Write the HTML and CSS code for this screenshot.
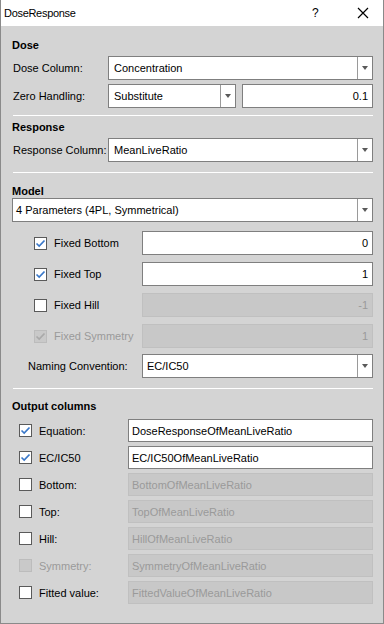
FILE: index.html
```html
<!DOCTYPE html>
<html>
<head>
<meta charset="utf-8">
<link rel="stylesheet" href="styles.css">
</head>
<body>
<div class="win">
  <div class="titlebar">
    <span class="title">DoseResponse</span>
    <span class="help">?</span>
    <svg class="close" width="12" height="12" viewBox="0 0 12 12"><path d="M1 1 L11 11 M11 1 L1 11" stroke="#000" stroke-width="1.2" fill="none"/></svg>
  </div>
  <div class="content">
    <div class="hdr h-dose">Dose</div>
    <div class="lrow m4">
      <span class="lbl w96">Dose Column:</span>
      <div class="combo pad5"><span class="val">Concentration</span><span class="btn"><i class="arrow"></i></span></div>
    </div>
    <div class="lrow m4">
      <span class="lbl w96">Zero Handling:</span>
      <div class="pair">
        <div class="combo pad5"><span class="val">Substitute</span><span class="btn"><i class="arrow"></i></span></div>
        <div class="field num">0.1</div>
      </div>
    </div>
    <div class="sep s1"></div>
    <div class="hdr h-resp">Response</div>
    <div class="lrow m4">
      <span class="lbl w96">Response Column:</span>
      <div class="combo pad5"><span class="val">MeanLiveRatio</span><span class="btn"><i class="arrow"></i></span></div>
    </div>
    <div class="sep s2"></div>
    <div class="hdr h-model">Model</div>
    <div class="combo pad3 model-combo"><span class="val">4 Parameters (4PL, Symmetrical)</span><span class="btn"><i class="arrow"></i></span></div>

    <div class="prow first">
      <span class="cb checked"><svg viewBox="0 0 13 13" width="13" height="13"><path d="M2.5 6.5 L5.2 9 L10.5 3.5" stroke="#3a78c9" stroke-width="1.7" fill="none"/></svg></span>
      <span class="plbl">Fixed Bottom</span>
      <div class="field num">0</div>
    </div>
    <div class="prow">
      <span class="cb checked"><svg viewBox="0 0 13 13" width="13" height="13"><path d="M2.5 6.5 L5.2 9 L10.5 3.5" stroke="#3a78c9" stroke-width="1.7" fill="none"/></svg></span>
      <span class="plbl">Fixed Top</span>
      <div class="field num">1</div>
    </div>
    <div class="prow">
      <span class="cb"></span>
      <span class="plbl">Fixed Hill</span>
      <div class="field num disabled">-1</div>
    </div>
    <div class="prow">
      <span class="cb dis"><svg viewBox="0 0 13 13" width="13" height="13"><path d="M2.5 6.5 L5.2 9 L10.5 3.5" stroke="#a9a9a9" stroke-width="1.7" fill="none"/></svg></span>
      <span class="plbl dtext">Fixed Symmetry</span>
      <div class="field num disabled">1</div>
    </div>
    <div class="nrow">
      <span class="nlbl">Naming Convention:</span>
      <div class="combo pad4"><span class="val">EC/IC50</span><span class="btn"><i class="arrow"></i></span></div>
    </div>
    <div class="sep s3"></div>
    <div class="hdr h-out">Output columns</div>

    <div class="orow first">
      <span class="cb checked"><svg viewBox="0 0 13 13" width="13" height="13"><path d="M2.5 6.5 L5.2 9 L10.5 3.5" stroke="#3a78c9" stroke-width="1.7" fill="none"/></svg></span>
      <span class="olbl">Equation:</span>
      <div class="field txt">DoseResponseOfMeanLiveRatio</div>
    </div>
    <div class="orow">
      <span class="cb checked"><svg viewBox="0 0 13 13" width="13" height="13"><path d="M2.5 6.5 L5.2 9 L10.5 3.5" stroke="#3a78c9" stroke-width="1.7" fill="none"/></svg></span>
      <span class="olbl">EC/IC50</span>
      <div class="field txt">EC/IC50OfMeanLiveRatio</div>
    </div>
    <div class="orow">
      <span class="cb"></span>
      <span class="olbl">Bottom:</span>
      <div class="field txt disabled">BottomOfMeanLiveRatio</div>
    </div>
    <div class="orow">
      <span class="cb"></span>
      <span class="olbl">Top:</span>
      <div class="field txt disabled">TopOfMeanLiveRatio</div>
    </div>
    <div class="orow">
      <span class="cb"></span>
      <span class="olbl">Hill:</span>
      <div class="field txt disabled">HillOfMeanLiveRatio</div>
    </div>
    <div class="orow">
      <span class="cb dis"></span>
      <span class="olbl dtext">Symmetry:</span>
      <div class="field txt disabled">SymmetryOfMeanLiveRatio</div>
    </div>
    <div class="orow">
      <span class="cb"></span>
      <span class="olbl">Fitted value:</span>
      <div class="field txt disabled">FittedValueOfMeanLiveRatio</div>
    </div>
  </div>
</div>
</body>
</html>
```
FILE: styles.css
```css
html, body {
  margin: 0;
  padding: 0;
  background: #d4d4d4;
}
.win {
  box-sizing: border-box;
  width: 384px;
  height: 624px;
  border: 1px solid #8a8a8a;
  border-top: none;
  background: #d4d4d4;
  font-family: "Liberation Sans", Arial, sans-serif;
  font-size: 11px;
  color: #000;
  overflow: hidden;
}
.titlebar {
  height: 26px;
  background: #fff;
  display: flex;
  align-items: center;
  padding-left: 3px;
  font-size: 11px;
}
.title { flex: 1; letter-spacing: -0.3px; }
.help {
  width: 12px;
  margin-right: 33px;
  font-size: 12px;
}
.close { margin-right: 14px; }
.content {
  display: flex;
  flex-direction: column;
  padding: 0 10px 0 11px;
}
.hdr {
  font-weight: bold;
  line-height: 13px;
  height: 13px;
}
.h-dose { margin-top: 13px; }
.h-resp { margin-top: 5px; }
.h-model { margin-top: 12px; }
.h-out { margin-top: 11px; }
.m4 { margin-top: 4px; }
.lrow {
  display: flex;
  align-items: center;
  height: 24px;
}
.lbl { flex: none; padding-left: 1px; }
.w96 { width: 95px; }
.pair {
  flex: 1;
  display: flex;
  gap: 6px;
  height: 24px;
}
.pair > * { flex: 1; }
.combo {
  box-sizing: border-box;
  flex: 1;
  height: 24px;
  border: 1px solid #7f7f7f;
  background: #fff;
  display: flex;
  align-items: center;
}
.combo .val { flex: 1; white-space: nowrap; overflow: hidden; }
.pad5 .val { padding-left: 5px; }
.pad4 .val { padding-left: 4px; }
.pad3 .val { padding-left: 3px; }
.combo .btn {
  width: 14px;
  height: 22px;
  border-left: 1px solid #9a9a9a;
  display: flex;
  align-items: center;
  justify-content: center;
}
.arrow {
  width: 0;
  height: 0;
  border-left: 3.5px solid transparent;
  border-right: 3.5px solid transparent;
  border-top: 4px solid #5a5a5a;
}
.model-combo { flex: none; margin-top: 0; }
.field {
  box-sizing: border-box;
  height: 24px;
  border: 1px solid #7f7f7f;
  background: #fff;
  display: flex;
  align-items: center;
  white-space: nowrap;
  overflow: hidden;
}
.field.num { justify-content: flex-end; padding-right: 4px; }
.field.txt { padding-left: 3px; }
.field.disabled {
  background: #c8c8c8;
  border-color: #c0c0c0;
  color: #9a9a9a;
}
.sep {
  height: 1px;
  background: #ffffff;
  margin-left: 1px;
}
.s1 { margin-top: 7px; }
.s2 { margin-top: 10px; }
.s3 { margin-top: 10px; }
.cb {
  box-sizing: border-box;
  flex: none;
  width: 13px;
  height: 13px;
  border: 1px solid #5a5a5a;
  background: #fff;
  display: flex;
  align-items: center;
  justify-content: center;
}
.cb svg { display: block; flex: none; }
.cb.dis {
  background: #c9c9c9;
  border-color: #bcbcbc;
}
.dtext { color: #9a9a9a; }
.prow {
  display: flex;
  align-items: center;
  height: 24px;
  margin-top: 7px;
  padding-left: 22px;
}
.prow.first { margin-top: 9px; }
.prow .cb { margin-right: 7px; }
.plbl { width: 88px; flex: none; }
.prow .field { flex: 1; }
.nrow {
  display: flex;
  align-items: center;
  height: 24px;
  margin-top: 6px;
  padding-left: 16px;
}
.nlbl { width: 114px; flex: none; }
.orow {
  display: flex;
  align-items: center;
  height: 23px;
  margin-top: 4px;
  padding-left: 7px;
}
.orow.first { margin-top: 6px; }
.orow .cb { margin-right: 7px; }
.olbl { width: 89px; flex: none; }
.orow .field { flex: 1; height: 23px; }
```
